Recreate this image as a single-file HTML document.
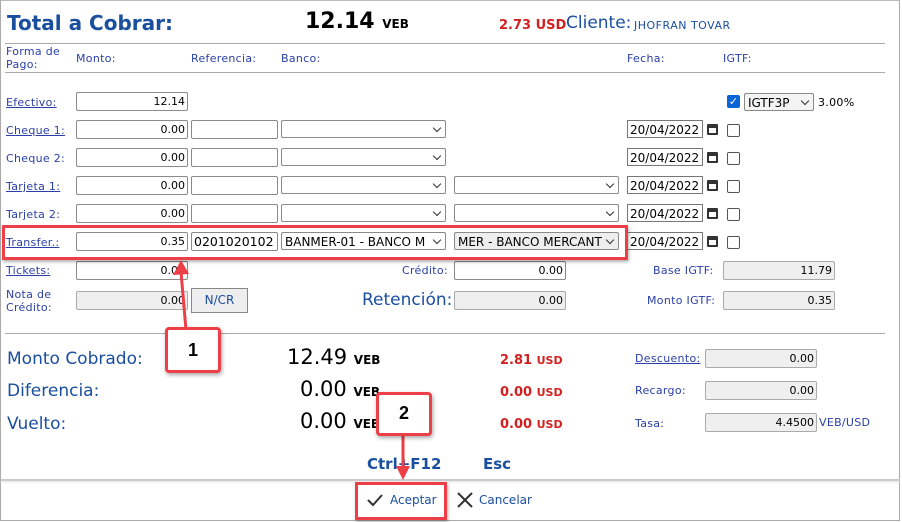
<!DOCTYPE html>
<html><head><meta charset="utf-8"><style>
body{margin:0;width:902px;height:522px;position:relative;overflow:hidden;background:#fff;font-family:"DejaVu Sans","Liberation Sans",sans-serif;}
.a{position:absolute;white-space:nowrap;}
.lb{font-size:11px;color:#2a3fa8;letter-spacing:0.3px;}
.u{text-decoration:underline;}
.in{position:absolute;height:17px;border:1px solid #8a8a8a;border-radius:2px;background:#fff;font-size:11px;text-align:right;line-height:17px;padding-right:2px;box-sizing:content-box;color:#000;}
.g{background:#efefef;border-color:#aaa;}
.sel{position:absolute;height:18px;border:1px solid #8a8a8a;border-radius:2px;background:#fff;font-size:12px;line-height:18px;padding-left:3px;box-sizing:border-box;overflow:hidden;}
.sel:after{content:"";position:absolute;right:5px;top:4px;width:5px;height:5px;border-right:1.5px solid #333;border-bottom:1.5px solid #333;transform:rotate(45deg);background:inherit;}
.cb{position:absolute;width:11px;height:11px;border:1px solid #555;border-radius:2px;background:#fff;}
.hr{position:absolute;left:5px;width:880px;height:1px;background:#aaa;}
.date{position:absolute;width:76px;height:18px;border:1px solid #777;font-size:12px;line-height:18px;padding-left:2px;box-sizing:border-box;overflow:hidden;}
.cal{position:absolute;width:11px;height:11px;background:#333;border-radius:1px;}
.cal:after{content:"";position:absolute;left:2px;top:4px;width:7px;height:5px;background:#fff;}
.big{font-size:17px;color:#1a4fa0;}
.red{color:#d42020;font-weight:bold;font-size:13px;}
.num{font-size:21px;color:#000;}
.veb{font-size:12px;font-weight:bold;}
.ann{position:absolute;border:3px solid #ec3f47;background:#fff;border-radius:4px;box-shadow:1px 2px 4px rgba(0,0,0,.35);font:bold 18px "Liberation Sans",sans-serif;text-align:center;}
</style></head><body>
<div class="a" style="left:0;top:0;width:900px;height:521px;border:1px solid #aaa;border-top:1px solid #bbb;box-sizing:border-box"></div>
<div class="a" style="left:7px;top:11px;font-size:20px;font-weight:bold;color:#1a4fa0">Total a Cobrar:</div>
<div class="a" style="left:305px;top:9px;font-size:22px;font-weight:bold">12.14 <span style="font-size:12px">VEB</span></div>
<div class="a red" style="left:499px;top:18px">2.73 USD</div>
<div class="a" style="left:566px;top:13px;font-size:17px;color:#1a4fa0">Cliente:</div>
<div class="a" style="left:634px;top:19px;font-size:11px;color:#1a4fa0;letter-spacing:0.5px">JHOFRAN TOVAR</div>
<div class="hr" style="top:43px"></div>
<div class="a lb" style="left:6px;top:45px;line-height:13px">Forma de<br>Pago:</div>
<div class="a lb" style="left:76px;top:52px">Monto:</div>
<div class="a lb" style="left:191px;top:52px">Referencia:</div>
<div class="a lb" style="left:281px;top:52px">Banco:</div>
<div class="a lb" style="left:627px;top:52px">Fecha:</div>
<div class="a lb" style="left:723px;top:52px">IGTF:</div>
<div class="hr" style="top:72px"></div>

<div class="a lb u" style="left:6px;top:96px">Efectivo:</div>
<div class="in" style="left:76px;top:92px;width:108px">12.14</div>
<div class="a" style="left:727px;top:95px;width:13px;height:13px;background:#0a64d8;border-radius:2px;color:#fff;font-size:11px;text-align:center;line-height:13px">✓</div>
<div class="sel" style="left:744px;top:93px;width:70px;font-size:12px;background:#f4f4f4">IGTF3P</div>
<div class="a" style="left:818px;top:96px;font-size:11px;letter-spacing:0.3px">3.00%</div>

<div class="a lb u" style="left:6px;top:124px">Cheque 1:</div>
<div class="a lb" style="left:6px;top:152px">Cheque 2:</div>
<div class="a lb u" style="left:6px;top:180px">Tarjeta 1:</div>
<div class="a lb" style="left:6px;top:208px">Tarjeta 2:</div>
<div class="a lb u" style="left:6px;top:236px">Transfer.:</div>

<div class="in" style="left:76px;top:120px;width:108px">0.00</div>
<div class="in" style="left:76px;top:148px;width:108px">0.00</div>
<div class="in" style="left:76px;top:176px;width:108px">0.00</div>
<div class="in" style="left:76px;top:204px;width:108px">0.00</div>
<div class="in" style="left:76px;top:232px;width:108px">0.35</div>

<div class="in" style="left:191px;top:120px;width:83px"></div>
<div class="in" style="left:191px;top:148px;width:83px"></div>
<div class="in" style="left:191px;top:176px;width:83px"></div>
<div class="in" style="left:191px;top:204px;width:83px"></div>
<div class="in" style="left:191px;top:232px;width:83px;text-align:left;padding-left:2px;font-size:12.5px;padding-right:0">0201020102</div>

<div class="sel" style="left:281px;top:120px;width:165px"></div>
<div class="sel" style="left:281px;top:148px;width:165px"></div>
<div class="sel" style="left:281px;top:176px;width:165px"></div>
<div class="sel" style="left:281px;top:204px;width:165px"></div>
<div class="sel" style="left:281px;top:232px;width:165px;font-size:12px">BANMER-01 - BANCO M</div>

<div class="sel" style="left:454px;top:176px;width:165px"></div>
<div class="sel" style="left:454px;top:204px;width:165px"></div>
<div class="sel" style="left:454px;top:232px;width:165px;font-size:12px;background:#eee">MER - BANCO MERCANT</div>

<div class="date" style="left:627px;top:120px">20/04/2022</div><div class="cal" style="left:707px;top:124px"></div><div class="cb" style="left:727px;top:124px"></div>
<div class="date" style="left:627px;top:148px">20/04/2022</div><div class="cal" style="left:707px;top:152px"></div><div class="cb" style="left:727px;top:152px"></div>
<div class="date" style="left:627px;top:176px">20/04/2022</div><div class="cal" style="left:707px;top:180px"></div><div class="cb" style="left:727px;top:180px"></div>
<div class="date" style="left:627px;top:204px">20/04/2022</div><div class="cal" style="left:707px;top:208px"></div><div class="cb" style="left:727px;top:208px"></div>
<div class="date" style="left:627px;top:232px">20/04/2022</div><div class="cal" style="left:707px;top:236px"></div><div class="cb" style="left:727px;top:236px"></div>

<div class="a lb u" style="left:6px;top:264px">Tickets:</div>
<div class="in" style="left:76px;top:261px;width:108px">0.00</div>
<div class="a lb" style="left:402px;top:264px">Crédito:</div>
<div class="in" style="left:454px;top:261px;width:108px">0.00</div>
<div class="a lb" style="left:653px;top:264px">Base IGTF:</div>
<div class="in g" style="left:723px;top:261px;width:108px">11.79</div>

<div class="a lb" style="left:6px;top:288px;line-height:13px">Nota de<br>Crédito:</div>
<div class="in g" style="left:76px;top:291px;width:108px">0.00</div>
<div class="a" style="left:191px;top:288px;width:55px;height:23px;border:1px solid #888;background:#eee;font-size:12px;color:#1a4fa0;text-align:center;line-height:23px">N/CR</div>
<div class="a big" style="left:362px;top:290px">Retención:</div>
<div class="in g" style="left:454px;top:291px;width:108px">0.00</div>
<div class="a lb" style="left:647px;top:294px">Monto IGTF:</div>
<div class="in g" style="left:723px;top:291px;width:108px">0.35</div>

<div class="hr" style="top:333px"></div>

<div class="a big" style="left:7px;top:349px">Monto Cobrado:</div>
<div class="a num" style="left:287px;top:345px">12.49 <span class="veb">VEB</span></div>
<div class="a red" style="left:500px;top:353px">2.81 <span style="font-size:11px">USD</span></div>
<div class="a lb u" style="left:635px;top:352px">Descuento:</div>
<div class="in g" style="left:705px;top:349px;width:108px">0.00</div>

<div class="a big" style="left:7px;top:381px">Diferencia:</div>
<div class="a num" style="left:300px;top:377px">0.00 <span class="veb">VEB</span></div>
<div class="a red" style="left:500px;top:385px">0.00 <span style="font-size:11px">USD</span></div>
<div class="a lb" style="left:635px;top:384px">Recargo:</div>
<div class="in g" style="left:705px;top:381px;width:108px">0.00</div>

<div class="a big" style="left:7px;top:414px">Vuelto:</div>
<div class="a num" style="left:300px;top:409px">0.00 <span class="veb">VEB</span></div>
<div class="a red" style="left:500px;top:417px">0.00 <span style="font-size:11px">USD</span></div>
<div class="a lb" style="left:635px;top:417px">Tasa:</div>
<div class="in g" style="left:705px;top:413px;width:108px">4.4500</div>
<div class="a lb" style="left:819px;top:416px">VEB/USD</div>

<div class="a" style="left:367px;top:455px;font:bold 15px 'DejaVu Sans',sans-serif;color:#1a4fa0">Ctrl+F12</div>
<div class="a" style="left:483px;top:455px;font:bold 15px 'DejaVu Sans',sans-serif;color:#1a4fa0">Esc</div>
<div class="a" style="left:1px;top:479px;width:899px;height:2px;background:#ccc;box-shadow:0 1px 2px #ddd"></div>
<svg class="a" style="left:366px;top:492px" width="18" height="16"><path d="M2 8 L7 13 L16 3" stroke="#333" stroke-width="2" fill="none"/></svg>
<div class="a" style="left:390px;top:493px;font-size:12px;color:#1a4fa0">Aceptar</div>
<svg class="a" style="left:456px;top:491px" width="18" height="18"><path d="M2 2 L16 16 M16 2 L2 16" stroke="#333" stroke-width="2"/></svg>
<div class="a" style="left:479px;top:493px;font-size:12px;color:#1a4fa0">Cancelar</div>

<div class="a" style="left:2px;top:225px;width:626px;height:35px;border:3px solid #ec3f47;box-sizing:border-box;box-shadow:1px 2px 3px rgba(0,0,0,.3)"></div>
<div class="a" style="left:355px;top:482px;width:92px;height:38px;border:3px solid #ec3f47;box-sizing:border-box;box-shadow:1px 2px 3px rgba(0,0,0,.3)"></div>
<svg class="a" style="left:0;top:0" width="902" height="522"><path d="M186 330 L181 272" stroke="#ec3f47" stroke-width="3"/><path d="M173 275 L181 260 L189 274 Z" fill="#ec3f47"/><path d="M403 432 L403 468" stroke="#ec3f47" stroke-width="3"/><path d="M396 466 L403 480 L410 466 Z" fill="#ec3f47"/></svg>
<div class="ann" style="left:165px;top:327px;width:50px;height:40px;line-height:40px">1</div>
<div class="ann" style="left:376px;top:392px;width:50px;height:38px;line-height:36px">2</div>
</body></html>
